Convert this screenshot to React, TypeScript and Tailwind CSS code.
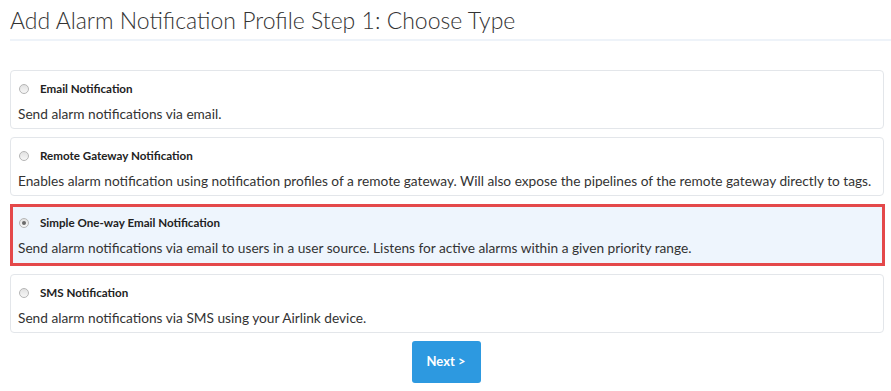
import React from 'react';

const options = [
  {
    title: 'Email Notification',
    desc: 'Send alarm notifications via email.',
  },
  {
    title: 'Remote Gateway Notification',
    desc: 'Enables alarm notification using notification profiles of a remote gateway. Will also expose the pipelines of the remote gateway directly to tags.',
  },
  {
    title: 'Simple One-way Email Notification',
    desc: 'Send alarm notifications via email to users in a user source. Listens for active alarms within a given priority range.',
    selected: true,
  },
  {
    title: 'SMS Notification',
    desc: 'Send alarm notifications via SMS using your Airlink device.',
  },
];

function Radio({ checked }: { checked?: boolean }) {
  return (
    <span className="w-[10px] h-[10px] rounded-full border border-[#b5b5b5] bg-gradient-to-b from-[#e2e2e2] to-[#f7f7f7] flex items-center justify-center shrink-0">
      {checked && <span className="w-[4px] h-[4px] rounded-full bg-[#6a6a6a]" />}
    </span>
  );
}

export default function App() {
  return (
    <div className="w-[891px] h-[391px] bg-white text-[#333] overflow-hidden" style={{ fontFamily: 'Lato, "Liberation Sans", sans-serif' }}>
      {/* Header */}
      <div className="pl-[10px] pt-[6px]">
        <h1 className="text-[23px] leading-[28px] font-light text-[#333]">Add Alarm Notification Profile Step 1: Choose Type</h1>
        <div className="mt-[5px] h-[2px] bg-[#eef3f9]" />
      </div>

      {/* Options */}
      <div className="px-[8px] pr-[7px] mt-[29px] flex flex-col gap-[8px]">
        {options.map((o) => (
          <div
            key={o.title}
            className={
              o.selected
                ? 'border-[3px] border-[#e4484a] bg-[#eef5fd] h-[62px] px-[5px] pt-[8px] ml-[2px] mr-[-1px]'
                : 'border border-[#e3e6ea] rounded-[4px] bg-white h-[59px] px-[7px] pt-[10px] ml-[2px]'
            }
          >
            <div className="flex items-center h-[16px] pl-[1px]">
              <Radio checked={o.selected} />
              <span className="ml-[11px] text-[11.6px] font-bold text-[#222]">{o.title}</span>
            </div>
            <div className="mt-[8px] text-[13.7px] leading-[18px] text-[#333] whitespace-nowrap">{o.desc}</div>
          </div>
        ))}
      </div>

      {/* Footer */}
      <div className="flex justify-center mt-[8px] pl-[1px]">
        <button className="w-[69px] h-[42px] rounded-[3px] bg-[#2d99e0] text-white text-[13px] font-bold">Next &gt;</button>
      </div>
    </div>
  );
}
